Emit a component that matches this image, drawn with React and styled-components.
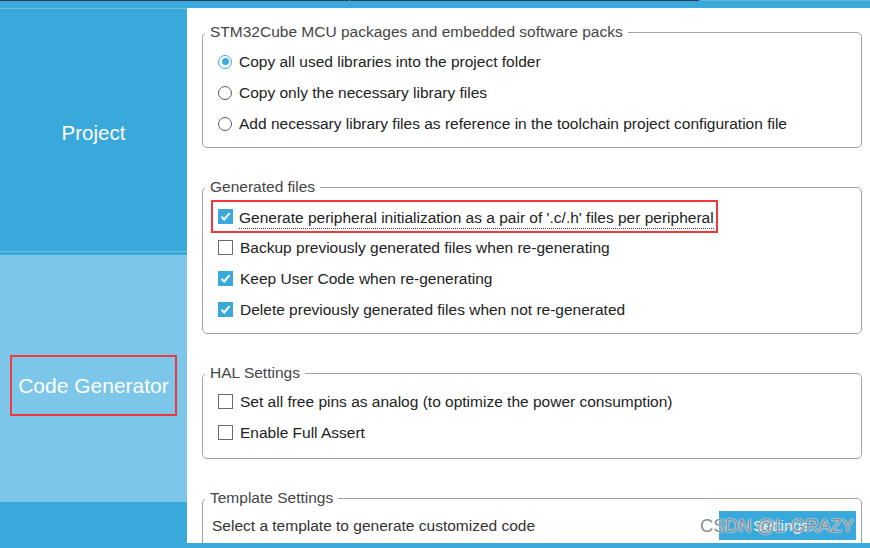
import React from "react";
import styled, { createGlobalStyle } from "styled-components";

const GlobalStyle = createGlobalStyle`
  html, body {
    margin: 0;
    padding: 0;
    background: #ffffff;
  }
  body {
    font-family: "Liberation Sans", Arial, sans-serif;
  }
`;

const BLUE = "#39a8db";
const LIGHT_BLUE = "#7cc6e9";

const Window = styled.div`
  position: relative;
  width: 870px;
  height: 548px;
  display: flex;
  flex-direction: column;
  overflow: hidden;
  background: ${BLUE};
`;

const TopStrip = styled.div`
  display: flex;
  height: 8px;
  flex-shrink: 0;
`;

const TabEdge = styled.div`
  width: ${({ $width }) => ($width ? `${$width}px` : "auto")};
  flex: ${({ $width }) => ($width ? "none" : "1")};
  margin-right: ${({ $gap }) => ($gap ? "1px" : "0")};
  border-top: 1px solid ${({ $dark }) => ($dark ? "#2b3b57" : "#5cb9e4")};
  background: ${BLUE};
`;

const Body = styled.div`
  display: flex;
  height: 535px;
  flex-shrink: 0;
`;

const Sidebar = styled.nav`
  width: 187px;
  flex-shrink: 0;
  display: flex;
  flex-direction: column;
  background: ${BLUE};
  border-top: 1px solid #6fc0e6;
`;

const NavItem = styled.div`
  height: ${({ $height }) => $height}px;
  box-sizing: border-box;
  display: flex;
  align-items: center;
  justify-content: center;
  padding-top: ${({ $shift }) => $shift || 0}px;
  background: ${({ $active }) => ($active ? LIGHT_BLUE : BLUE)};
  border-bottom: ${({ $divider }) => ($divider ? "1px solid #6fc0e6" : "none")};
  margin-bottom: ${({ $divider }) => ($divider ? "3px" : "0")};
  color: #ffffff;
  font-size: 21px;
`;

const NavLabel = styled.span`
  line-height: 23px;
  padding: ${({ $boxed }) => ($boxed ? "17px 6px" : "0")};
  border: ${({ $boxed }) => ($boxed ? "2px solid #f0393c" : "none")};
  font-size: ${({ $boxed }) => ($boxed ? "21px" : "20.5px")};
`;

const Main = styled.main`
  flex: 1;
  background: #ffffff;
  padding: 15px 8px 0 15px;
  display: flex;
  flex-direction: column;
  gap: 30px;
  overflow: hidden;
`;

const Group = styled.fieldset`
  margin: 0;
  padding: 0 0 ${({ $bottom }) => $bottom || 8}px 0;
  border: 1px solid #a4a4a4;
  border-radius: 5px;
  min-width: 0;
  flex-shrink: 0;
`;

const Legend = styled.legend`
  margin-left: 2px;
  padding: 0 5px 0 5px;
  font-size: 15.5px;
  line-height: 18px;
  color: #454545;
`;

const Rows = styled.div`
  padding: ${({ $top }) => ($top === undefined ? 5 : $top)}px 0 0 15px;
  display: flex;
  flex-direction: column;
`;

const Row = styled.div`
  display: flex;
  align-items: center;
  gap: 7px;
  height: 31px;
  font-size: 15.5px;
  color: #222222;
  width: fit-content;
  ${({ $highlight }) =>
    $highlight &&
    `
    height: 33px;
    margin: -1px 0 -1px -7px;
    padding: 0 2px 0 5px;
    gap: 6px;
    border: 2px solid #f0393c;
    box-sizing: border-box;
  `}
`;

const Focused = styled.span`
  border-bottom: 1px dotted #444;
  padding-bottom: 1px;
  margin-top: 4px;
`;

const Radio = styled.span`
  width: 14px;
  height: 14px;
  box-sizing: border-box;
  border-radius: 50%;
  border: 1.5px solid ${({ $checked }) => ($checked ? BLUE : "#5a5a5a")};
  display: flex;
  align-items: center;
  justify-content: center;
  flex-shrink: 0;
  background: #ffffff;
  &::after {
    content: "";
    width: 7px;
    height: 7px;
    border-radius: 50%;
    background: ${({ $checked }) => ($checked ? BLUE : "transparent")};
  }
`;

const Box = styled.span`
  width: 15px;
  height: 15px;
  box-sizing: border-box;
  border: ${({ $checked }) => ($checked ? "none" : "1.5px solid #6a6a6a")};
  background: ${({ $checked }) => ($checked ? BLUE : "#ffffff")};
  display: flex;
  align-items: center;
  justify-content: center;
  flex-shrink: 0;
`;

const Check = ({ checked }) => (
  <Box $checked={checked}>
    {checked && (
      <svg width="13" height="13" viewBox="0 0 13 13">
        <path d="M2.5 6.8 L5.2 9.5 L10.6 3.2" fill="none" stroke="#ffffff" strokeWidth="2" />
      </svg>
    )}
  </Box>
);

const TemplateRow = styled.div`
  display: flex;
  align-items: center;
  justify-content: space-between;
  padding: 4px 5px 0 9px;
  font-size: 15.5px;
  color: #333333;
`;

const SettingsButton = styled.button`
  width: 137px;
  height: 29px;
  border: none;
  background: ${BLUE};
  color: #e8f5fb;
  font-family: "Liberation Sans", Arial, sans-serif;
  font-size: 15.5px;
  padding: 0;
`;

const BottomStrip = styled.div`
  height: 5px;
  flex-shrink: 0;
  background: ${BLUE};
`;

const Watermark = styled.div`
  position: absolute;
  left: 700px;
  top: 515px;
  font-size: 18.5px;
  color: rgba(110, 110, 110, 0.8);
  text-shadow: 0 0 2px #ffffff, 0 0 1px #ffffff;
  letter-spacing: -0.2px;
  pointer-events: none;
`;

const packOptions = [
  { label: "Copy all used libraries into the project folder", checked: true },
  { label: "Copy only the necessary library files", checked: false },
  {
    label: "Add necessary library files as reference in the toolchain project configuration file",
    checked: false,
  },
];

const generatedOptions = [
  { label: "Backup previously generated files when re-generating", checked: false },
  { label: "Keep User Code when re-generating", checked: true },
  { label: "Delete previously generated files when not re-generated", checked: true },
];

const halOptions = [
  { label: "Set all free pins as analog (to optimize the power consumption)", checked: false },
  { label: "Enable Full Assert", checked: false },
];

export default function App() {
  return (
    <>
      <GlobalStyle />
      <Window>
        <TopStrip>
          <TabEdge $width={349} $dark $gap />
          <TabEdge $width={349} $dark $gap />
          <TabEdge />
        </TopStrip>
        <Body>
          <Sidebar>
            <NavItem $height={243} $shift={4} $divider>
              <NavLabel>Project</NavLabel>
            </NavItem>
            <NavItem $height={247} $shift={14} $active>
              <NavLabel $boxed>Code Generator</NavLabel>
            </NavItem>
          </Sidebar>
          <Main>
            <Group>
              <Legend>STM32Cube MCU packages and embedded software packs</Legend>
              <Rows>
                {packOptions.map((o) => (
                  <Row key={o.label}>
                    <Radio $checked={o.checked} />
                    <span>{o.label}</span>
                  </Row>
                ))}
              </Rows>
            </Group>

            <Group>
              <Legend>Generated files</Legend>
              <Rows>
                <Row $highlight>
                  <Check checked />
                  <Focused>Generate peripheral initialization as a pair of '.c/.h' files per peripheral</Focused>
                </Row>
                {generatedOptions.map((o) => (
                  <Row key={o.label}>
                    <Check checked={o.checked} />
                    <span>{o.label}</span>
                  </Row>
                ))}
              </Rows>
            </Group>

            <Group $bottom={10}>
              <Legend>HAL Settings</Legend>
              <Rows $top={4}>
                {halOptions.map((o) => (
                  <Row key={o.label}>
                    <Check checked={o.checked} />
                    <span>{o.label}</span>
                  </Row>
                ))}
              </Rows>
            </Group>

            <Group $bottom={20}>
              <Legend>Template Settings</Legend>
              <TemplateRow>
                <span>Select a template to generate customized code</span>
                <SettingsButton>Settings...</SettingsButton>
              </TemplateRow>
            </Group>
          </Main>
        </Body>
        <BottomStrip />
        <Watermark>CSDN @L-GRAZY</Watermark>
      </Window>
    </>
  );
}
